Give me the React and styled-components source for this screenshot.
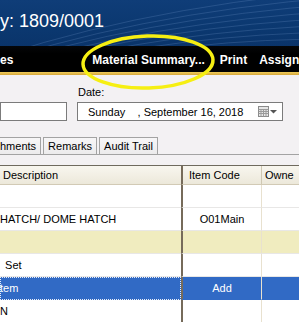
import styled, { createGlobalStyle } from "styled-components"

const GlobalStyle = createGlobalStyle`
  html, body {
    margin: 0;
    padding: 0;
    background: #f3f1f3;
    overflow: hidden;
  }
  body {
    font-family: "Liberation Sans", Arial, sans-serif;
    font-size: 11px;
    color: #000;
  }
`

const Page = styled.div`
  position: relative;
  width: 299px;
  height: 322px;
  overflow: hidden;
  background: #f3f1f3;
`

const Header = styled.header`
  position: relative;
  height: 46px;
  background: linear-gradient(180deg, #0f3d78 0%, #0b3870 60%, #0a346a 100%);
  display: flex;
  align-items: flex-start;
  padding-top: 11px;
  box-sizing: border-box;
  overflow: hidden;
`

const Pattern = styled.svg`
  position: absolute;
  inset: 0;
  pointer-events: none;
`

const Title = styled.h1`
  position: relative;
  margin: 0;
  font-family: "Liberation Sans", Arial, sans-serif;
  font-weight: normal;
  font-size: 18px;
  line-height: 20px;
  color: #fff;
  white-space: nowrap;
`

const MenuBar = styled.nav`
  height: 26px;
  background: linear-gradient(180deg, #050608 0%, #000 30%, #000 100%);
  display: flex;
  align-items: center;
  padding-top: 2px;
  box-sizing: border-box;
  white-space: nowrap;
  overflow: hidden;
`

const MenuItem = styled.span`
  color: #fff;
  font-weight: bold;
  font-size: 12px;
  margin-left: ${p => p.$gap || 0}px;
`

const GoldStrip = styled.div`
  height: 3px;
  background: linear-gradient(180deg, #f0cd5c 0%, #d5a63a 100%);
`

const FormRow = styled.div`
  display: flex;
  align-items: flex-end;
  gap: 10px;
  padding-top: 10px;
`

const Field = styled.div`
  display: flex;
  flex-direction: column;
`

const Label = styled.label`
  font-size: 11px;
  line-height: 14px;
  margin: 0 0 3px 1px;
`

const TextBox = styled.div`
  width: ${p => p.$w}px;
  height: 19px;
  box-sizing: border-box;
  background: #fff;
  border: 1px solid #7b7b7b;
  display: flex;
  align-items: center;
  font-size: 11px;
  white-space: pre;
`

const DateText = styled.span`
  padding-left: 10px;
  flex: 1;
`

const CalButton = styled.span`
  display: flex;
  align-items: center;
  gap: 2px;
  padding-right: 5px;
`

const TabStrip = styled.div`
  display: flex;
  gap: 2px;
  margin-top: 16px;
  border-bottom: 1px solid #a3a3a3;
  height: 17px;
`

const Tab = styled.div`
  height: 17px;
  box-sizing: border-box;
  padding: 0 4px 0 ${p => (p.$clip ? 0 : 4)}px;
  border: 1px solid #a3a3a3;
  border-bottom: none;
  ${p => p.$clip && "border-left: none;"}
  background: linear-gradient(180deg, #f7f6f7 0%, #ecebec 100%);
  display: flex;
  align-items: center;
  font-size: 11px;
  white-space: nowrap;
`

const Grid = styled.div`
  margin-top: 10px;
  border-top: 1px solid #6f6a5e;
  display: grid;
  grid-template-columns: 181px 81px 1fr;
`

const HeadCell = styled.div`
  height: 19px;
  box-sizing: border-box;
  background: linear-gradient(180deg, #f8f6ef 0%, #ece8da 100%);
  border-bottom: 1px solid #d2cab5;
  display: flex;
  align-items: center;
  padding-left: ${p => p.$pad || 0}px;
  white-space: nowrap;
  overflow: hidden;
  ${p => p.$code && "border-left: 2px solid #766b5a; border-right: 1px solid #cfc8b3;"}
`

const Cell = styled.div`
  height: 23px;
  box-sizing: border-box;
  border-bottom: 1px solid ${p => (p.$sel ? "#316ac5" : "#e8e7e6")};
  background: ${p => (p.$sel ? "#316ac5" : p.$tint ? "#f0ecbf" : "#fff")};
  color: ${p => (p.$sel ? "#fff" : "#000")};
  display: flex;
  align-items: center;
  justify-content: ${p => (p.$code ? "center" : "flex-start")};
  padding-left: ${p => p.$pad || 0}px;
  white-space: pre;
  overflow: hidden;
  ${p => p.$code && "border-left: 2px solid #766b5a; border-right: 1px solid #e8e1cf;"}
  ${p => p.$focus && "outline: 1px dotted #e8eefa; outline-offset: -1px;"}
`

const Annotation = styled.svg`
  position: absolute;
  left: 79px;
  top: 32px;
  pointer-events: none;
  transform: rotate(-2deg);
`

const rows = [
  { desc: "", code: "" },
  { desc: "HATCH/ DOME HATCH", code: "O01Main" },
  { desc: "", code: "", tint: true },
  { desc: " Set", code: "", pad: 2 },
  { desc: "tem", code: "Add", sel: true },
  { desc: "N", code: "" },
]

function CalendarIcon() {
  return (
    <svg width="19" height="11" viewBox="0 0 19 11">
      <rect x="0.5" y="0.5" width="10" height="10" fill="#e6e6e6" stroke="#8a8a8a" />
      <path d="M0.5 3.5h10M0.5 5.5h10M0.5 7.5h10M3 3.5v7M5.5 3.5v7M8 3.5v7" stroke="#9a9a9a" strokeWidth="1" />
      <path d="M12 4h7l-3.5 3.5z" fill="#555" />
    </svg>
  )
}

export default function App() {
  return (
    <Page>
      <GlobalStyle />
      <Header>
        <Pattern width="299" height="46" viewBox="0 0 299 46">
          {[0, 1, 2, 3, 4, 5, 6, 7].map(i => (
            <path
              key={i}
              d={`M${-40 + i * 12} ${70} Q ${120 + i * 10} ${10 + i * 4} ${340} ${-10 + i * 7}`}
              stroke="rgba(140,175,225,0.2)"
              strokeWidth="1"
              fill="none"
            />
          ))}
        </Pattern>
        <Title>y: 1809/0001</Title>
      </Header>
      <MenuBar>
        <MenuItem>es</MenuItem>
        <MenuItem $gap={79}>Material Summary...</MenuItem>
        <MenuItem $gap={15}>Print</MenuItem>
        <MenuItem $gap={12}>Assign</MenuItem>
      </MenuBar>
      <GoldStrip />
      <FormRow>
        <Field>
          <TextBox $w={67} />
        </Field>
        <Field>
          <Label>Date:</Label>
          <TextBox $w={206}>
            <DateText>Sunday    , September 16, 2018</DateText>
            <CalButton>
              <CalendarIcon />
            </CalButton>
          </TextBox>
        </Field>
      </FormRow>
      <TabStrip>
        <Tab $clip>hments</Tab>
        <Tab>Remarks</Tab>
        <Tab>Audit Trail</Tab>
      </TabStrip>
      <Grid>
        <HeadCell $pad={3}>Description</HeadCell>
        <HeadCell $code $pad={6}>Item Code</HeadCell>
        <HeadCell $pad={3}>Owne</HeadCell>
        {rows.map((r, i) => [
          <Cell key={`d${i}`} $pad={r.pad} $sel={r.sel} $tint={r.tint} $focus={r.sel}>
            {r.desc}
          </Cell>,
          <Cell key={`c${i}`} $code $sel={r.sel} $tint={r.tint}>
            {r.code}
          </Cell>,
          <Cell key={`o${i}`} $sel={r.sel} $tint={r.tint} />,
        ])}
      </Grid>
      <Annotation width="138" height="60" viewBox="0 0 138 60">
        <ellipse cx="69" cy="30" rx="65" ry="26" fill="none" stroke="#f6ef12" strokeWidth="3.5" />
      </Annotation>
    </Page>
  )
}
